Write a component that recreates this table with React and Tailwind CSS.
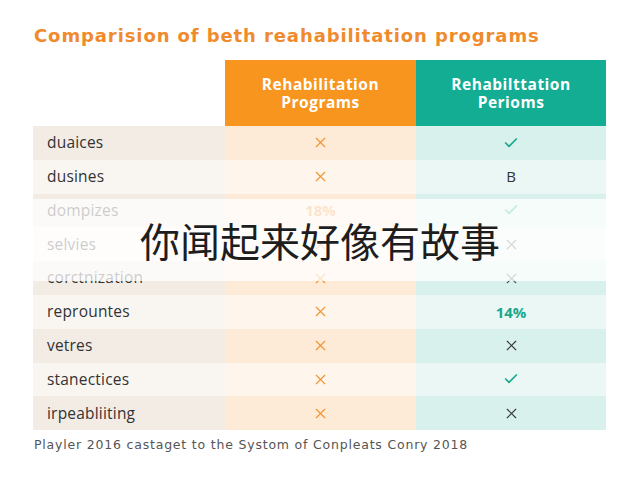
import { Check, X } from 'lucide-react';

const ROWS = [
  { label: 'duaices', left: 'x', right: 'check' },
  { label: 'dusines', left: 'x', right: 'B' },
  { label: 'dompizes', left: '18%', right: 'check' },
  { label: 'selvies', left: 'x', right: 'xgray' },
  { label: 'corctnization', left: 'x', right: 'xgray' },
  { label: 'reprountes', left: 'x', right: '14%' },
  { label: 'vetres', left: 'x', right: 'xdark' },
  { label: 'stanectices', left: 'x', right: 'check' },
  { label: 'irpeabliiting', left: 'x', right: 'xdark' },
];

function Cell({ value }) {
  if (value === 'x') return <X size={17} strokeWidth={1.6} className="text-[#f2922e]" />;
  if (value === 'xdark') return <X size={17} strokeWidth={1.6} className="text-[#3a3a3a]" />;
  if (value === 'xgray') return <X size={17} strokeWidth={1.6} className="text-[#555]" />;
  if (value === 'check') return <Check size={16} strokeWidth={2.6} className="text-[#1aa88f]" />;
  if (value === '18%') return <span className="text-[15px] font-bold text-[#f2922e]">18%</span>;
  if (value === '14%') return <span className="text-[15px] font-bold text-[#1aa88f]">14%</span>;
  return <span className="text-[15px] text-[#333]">{value}</span>;
}

export default function App() {
  return (
    <div className="relative h-[480px] w-[640px] overflow-hidden bg-white font-['Open_Sans',sans-serif]">
      <div className="pl-[33px] pr-[34px] pt-[24px]">
        <h1 className="pl-px font-['DejaVu_Sans',sans-serif] text-[18px] font-bold leading-[24px] tracking-[0.9px] text-[#ef8b2c]">
          Comparision of beth reahabilitation programs
        </h1>

        <div className="mt-[12px] grid grid-cols-[192px_191px_190px]">
          <div />
          <div className="flex h-[66px] flex-col items-center justify-center bg-[#f7951f] text-[15.5px] font-bold leading-[18px] tracking-[0.5px] text-white">
            <span>Rehabilitation</span>
            <span>Programs</span>
          </div>
          <div className="flex h-[66px] flex-col items-center justify-center bg-[#12ad93] text-[15.5px] font-bold leading-[18px] tracking-[0.5px] text-white">
            <span>Rehabilttation</span>
            <span>Perioms</span>
          </div>

          {ROWS.map((row, i) => {
            const odd = i % 2 === 0;
            return [
              <div
                key={row.label + 'a'}
                className={`flex h-[33.8px] items-center pl-[14px] text-[15.5px] tracking-[0.2px] text-[#333] ${odd ? 'bg-[#f2ece5]' : 'bg-[#f9f6f2]'}`}
              >
                {row.label}
              </div>,
              <div
                key={row.label + 'b'}
                className={`flex h-[33.8px] items-center justify-center ${odd ? 'bg-[#fdebd7]' : 'bg-[#fef5ec]'}`}
              >
                <Cell value={row.left} />
              </div>,
              <div
                key={row.label + 'c'}
                className={`flex h-[33.8px] items-center justify-center ${odd ? 'bg-[#d9f1ec]' : 'bg-[#ebf7f4]'}`}
              >
                <Cell value={row.right} />
              </div>,
            ];
          })}
        </div>

        <p className="mt-[6px] pl-px font-['DejaVu_Sans',sans-serif] text-[12.5px] tracking-[0.8px] text-[#555]">
          Playler 2016 castaget to the Systom of Conpleats Conry 2018
        </p>
      </div>

      {/* subtitle overlay */}
      <div className="absolute left-0 right-0 top-[199px] flex h-[82px] items-center justify-center bg-white/75">
        <span className="font-['Noto_Sans_CJK_SC',sans-serif] text-[40px] leading-none text-[#1e1e1e]">
          你闻起来好像有故事
        </span>
      </div>
    </div>
  );
}
